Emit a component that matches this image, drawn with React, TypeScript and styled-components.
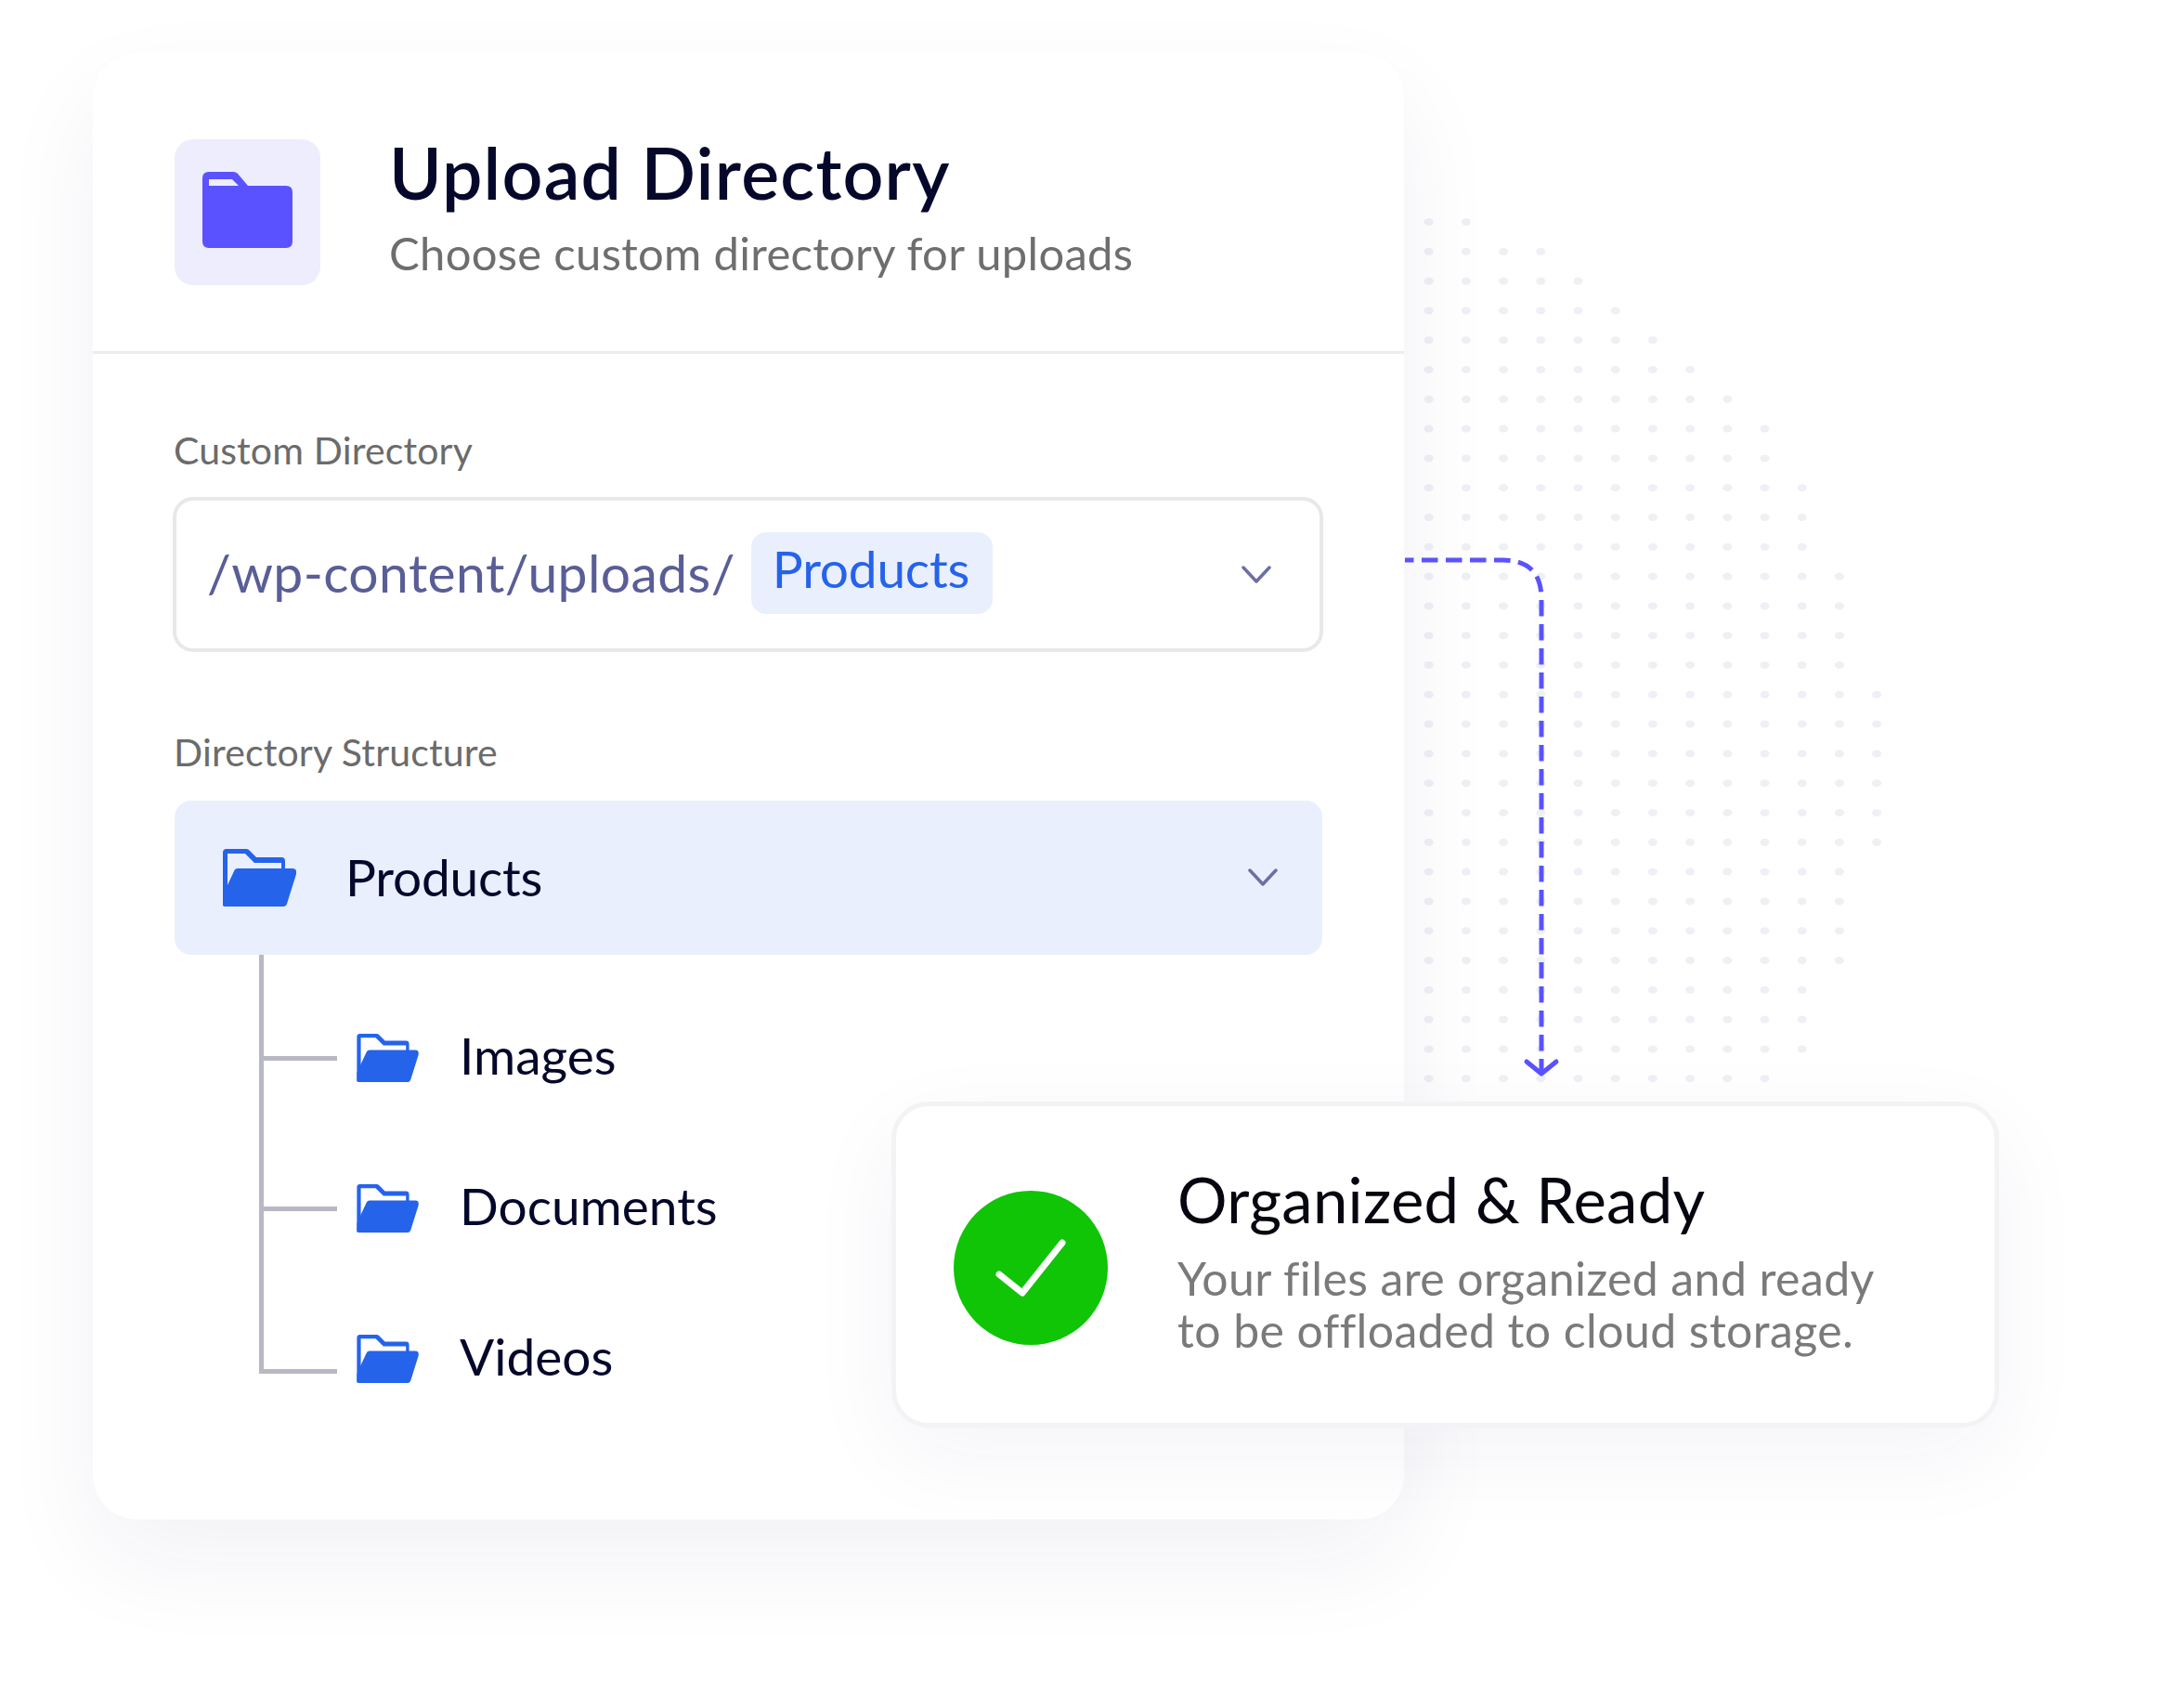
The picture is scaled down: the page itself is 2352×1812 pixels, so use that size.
import React from 'react'
import styled, { createGlobalStyle } from 'styled-components'

const GlobalStyle = createGlobalStyle`
  html, body { margin: 0; background: #fff; }
  body { font-family: Lato, "Noto Sans", sans-serif; }
`

const Stage = styled.div`
  position: relative;
  width: 2352px;
  height: 1812px;
  padding: 57px 0 0 100px;
  box-sizing: border-box;
  overflow: hidden;
  background: #fff;
`

const Backdrop = styled.svg`
  position: absolute;
  left: 0;
  top: 0;
`

const Card = styled.section`
  position: relative;
  width: 1412px;
  height: 1579px;
  background: #fff;
  border-radius: 48px;
  box-shadow: 0 45px 110px rgba(40, 40, 110, 0.06);
`

const Header = styled.header`
  display: flex;
  align-items: flex-start;
  gap: 74px;
  height: 324px;
  box-sizing: border-box;
  padding: 93px 0 0 88px;
  border-bottom: 3px solid #ececee;
`

const IconBox = styled.div`
  display: flex;
  align-items: center;
  justify-content: center;
  width: 157px;
  height: 157px;
  box-sizing: border-box;
  padding-bottom: 5px;
  border-radius: 20px;
  background: #eeedfe;
`

const HeaderText = styled.div`
  display: flex;
  flex-direction: column;
  gap: 15px;
  margin-top: -7px;
`

const Title = styled.h1`
  margin: 0;
  font-size: 77px;
  line-height: 84px;
  font-weight: 600;
  letter-spacing: 1.2px;
  color: #05082a;
  white-space: nowrap;
`

const Subtitle = styled.p`
  margin: 0;
  font-size: 49px;
  line-height: 60px;
  font-weight: 400;
  letter-spacing: 0.3px;
  color: #6e6e6e;
  white-space: nowrap;
`

const Body = styled.div`
  padding: 79px 88px 0;
`

const Label = styled.div<{ $top?: number; $bottom: number }>`
  margin-top: ${p => p.$top ?? 0}px;
  margin-bottom: ${p => p.$bottom}px;
  margin-left: -1px;
  font-size: 41px;
  line-height: 50px;
  letter-spacing: 0.15px;
  color: #6b6b6b;
  white-space: nowrap;
`

const Select = styled.div`
  display: flex;
  align-items: center;
  height: 167px;
  box-sizing: border-box;
  margin: 0 -1px 0 -2px;
  padding: 0 52px 0 33px;
  border: 4px solid #e8e8ea;
  border-radius: 22px;
`

const PathText = styled.span`
  margin-top: -5px;
  font-size: 57px;
  letter-spacing: 0.4px;
  color: #5a5e96;
  white-space: nowrap;
`

const Tag = styled.span`
  display: flex;
  align-items: center;
  height: 88px;
  box-sizing: border-box;
  margin-left: 17px;
  margin-top: -4px;
  padding: 0 25px 10px 23px;
  border-radius: 16px;
  background: #e9effd;
  font-size: 55px;
  letter-spacing: -0.2px;
  color: #2563eb;
`

const Chevron = styled.svg`
  margin-left: auto;
  flex: none;
`

const ParentRow = styled.div`
  display: flex;
  align-items: center;
  gap: 53px;
  height: 166px;
  box-sizing: border-box;
  padding: 0 48px 0 52px;
  border-radius: 18px;
  background: #e9effd;
  font-size: 55px;
  letter-spacing: -0.2px;
  color: #05082a;
`

const RowLabel = styled.span`
  margin-top: -3px;
`

const Tree = styled.div`
  position: relative;
  padding-top: 30px;

  &::before {
    content: '';
    position: absolute;
    left: 91px;
    top: 0;
    bottom: 66px;
    width: 5px;
    background: #b7b8c4;
  }
`

const TreeRow = styled.div<{ $branchShift?: number }>`
  position: relative;
  display: flex;
  align-items: center;
  gap: 44px;
  height: 162px;
  padding-left: 196px;
  font-size: 55px;
  color: #05082a;

  &::before {
    content: '';
    position: absolute;
    left: 91px;
    top: calc(50% + ${p => p.$branchShift ?? 0}px);
    width: 84px;
    height: 5px;
    margin-top: -2px;
    background: #b7b8c4;
  }
`

const TreeLabel = styled.span`
  margin-top: -6px;
`

const Notice = styled.aside`
  position: absolute;
  left: 960px;
  top: 1186px;
  display: flex;
  align-items: center;
  gap: 75px;
  width: 1193px;
  height: 351px;
  box-sizing: border-box;
  padding-left: 62px;
  background: #fff;
  border: 5px solid #f3f3f6;
  border-radius: 40px;
  box-shadow: 0 30px 100px rgba(40, 40, 110, 0.05);
`

const CheckCircle = styled.div`
  display: flex;
  align-items: center;
  justify-content: center;
  flex: none;
  width: 166px;
  height: 166px;
  margin-top: 6px;
  border-radius: 50%;
  background: #0fc506;
`

const NoticeText = styled.div`
  display: flex;
  flex-direction: column;
  gap: 21px;
  margin-top: -8px;
`

const NoticeTitle = styled.div`
  font-size: 67px;
  line-height: 72px;
  letter-spacing: 0.3px;
  color: #05060f;
  white-space: nowrap;
`

const NoticeBody = styled.div`
  font-size: 50px;
  line-height: 56px;
  letter-spacing: 0.4px;
  color: #7a7a7a;
  white-space: nowrap;
`

// visible dots per row of the fading grid behind the card
const dotRows = [2, 4, 5, 6, 7, 8, 9, 10, 10, 11, 11, 11, 12, 12, 12, 12, 13, 13, 13, 13, 13, 13, 12, 12, 12, 12, 11, 11, 11, 10]

function Dots () {
  return (
    <g fill="#eef0f5">
      {dotRows.flatMap((count, row) =>
        Array.from({ length: count }, (_, col) => (
          <ellipse
            key={`${row}-${col}`}
            cx={1538.7 + col * 40.2}
            cy={239 + row * 31.8}
            rx={5}
            ry={4}
          />
        )),
      )}
    </g>
  )
}

function ClosedFolder () {
  return (
    <svg width="97" height="82" viewBox="0 0 97 82">
      <path
        fillRule="evenodd"
        fill="#5b52ff"
        d="M0 7Q0 0 7 0H33Q36 0 38 2L49 15H90Q97 15 97 22V75Q97 82 90 82H7Q0 82 0 75ZM7 8V15H39L32 8Z"
      />
    </svg>
  )
}

function OpenFolder ({ width, height }: { width: number; height: number }) {
  return (
    <svg width={width} height={height} viewBox="0 0 79 62">
      <path
        fill="#2563eb"
        d="M0 4Q0 0 4 0H25Q27 0 28 1L36 9H63Q67 9 67 13V24H63V15H34L24 5H5V50L0 62Z"
      />
      <path
        fill="#2563eb"
        d="M0 60V50L5 39L12 24Q13 21 16 21H75Q80 21 79 27L69 59Q68 62 65 62H2Q0 62 0 60Z"
      />
    </svg>
  )
}

function ChevronIcon () {
  return (
    <Chevron width="32" height="20" viewBox="0 0 32 20" fill="none">
      <path d="M2 2L16 17L30 2" stroke="#6b6fa3" strokeWidth="3.5" strokeLinecap="round" strokeLinejoin="round" />
    </Chevron>
  )
}

export default function App () {
  return (
    <Stage>
      <GlobalStyle />
      <Backdrop width="2352" height="1812">
        <Dots />
      </Backdrop>
      <Card>
        <Header>
          <IconBox><ClosedFolder /></IconBox>
          <HeaderText>
            <Title>Upload Directory</Title>
            <Subtitle>Choose custom directory for uploads</Subtitle>
          </HeaderText>
        </Header>
        <Body>
          <Label $bottom={25}>Custom Directory</Label>
          <Select>
            <PathText>/wp-content/uploads/</PathText>
            <Tag>Products</Tag>
            <ChevronIcon />
          </Select>
          <Label $top={83} $bottom={27}>Directory Structure</Label>
          <ParentRow>
            <OpenFolder width={79} height={62} />
            <RowLabel>Products</RowLabel>
            <ChevronIcon />
          </ParentRow>
          <Tree>
            <TreeRow><OpenFolder width={67} height={52} /><TreeLabel>Images</TreeLabel></TreeRow>
            <TreeRow><OpenFolder width={67} height={52} /><TreeLabel>Documents</TreeLabel></TreeRow>
            <TreeRow $branchShift={13}><OpenFolder width={67} height={52} /><TreeLabel>Videos</TreeLabel></TreeRow>
          </Tree>
        </Body>
      </Card>
      <Backdrop width="2352" height="1812" fill="none">
        <path
          d="M1513 603H1618Q1660 603 1660 645V1155"
          stroke="#5b52ff"
          strokeWidth="5"
          strokeDasharray="17.5 8.5"
          strokeDashoffset="8"
        />
        <path d="M1644 1143L1660 1156L1676 1143" stroke="#5b52ff" strokeWidth="5" strokeLinecap="round" strokeLinejoin="round" />
      </Backdrop>
      <Notice>
        <CheckCircle>
          <svg width="76" height="62" viewBox="0 0 76 62" fill="none">
            <path d="M4 38L29 58L72 4" stroke="#fff" strokeWidth="7" strokeLinecap="round" strokeLinejoin="round" />
          </svg>
        </CheckCircle>
        <NoticeText>
          <NoticeTitle>Organized &amp; Ready</NoticeTitle>
          <NoticeBody>
            Your files are organized and ready<br />
            to be offloaded to cloud storage.
          </NoticeBody>
        </NoticeText>
      </Notice>
    </Stage>
  )
}
